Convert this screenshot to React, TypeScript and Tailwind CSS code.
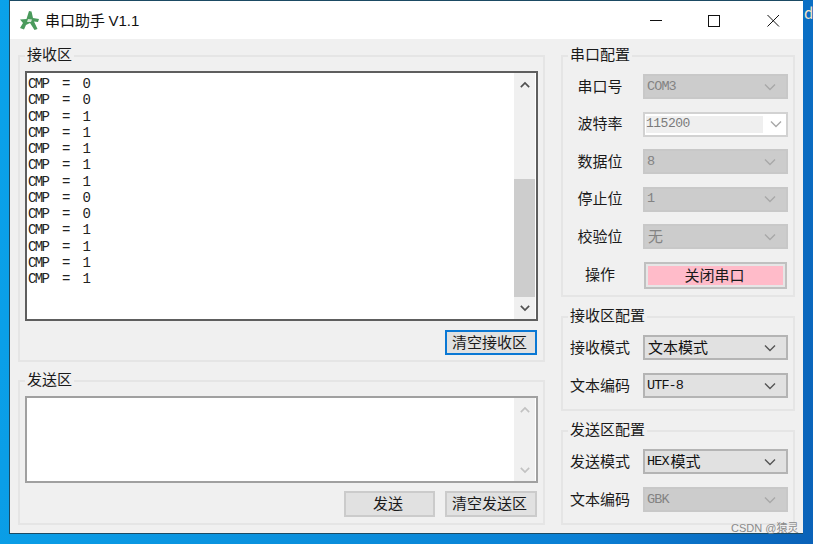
import React from "react";

const cjk = '"Noto Sans CJK SC", "Noto Sans", sans-serif';
const mono = '"Liberation Mono", monospace';

function Chevron({ color = "#444", up = false, w = 12, sw = 1.4 }: { color?: string; up?: boolean; w?: number; sw?: number }) {
  return (
    <svg width={w} height={8} viewBox="0 0 12 8" fill="none">
      <path d={up ? "M1 6.5 L6 1.5 L11 6.5" : "M1 1.5 L6 6.5 L11 1.5"} stroke={color} strokeWidth={sw} />
    </svg>
  );
}

function Group({ title, className, children }: { title: string; className: string; children: React.ReactNode }) {
  return (
    <section className={`relative border-2 border-[#e5e5e5] ${className}`}>
      <span className="absolute left-[5px] top-[-13px] bg-[#f0f0f0] px-[2px] text-[15px] leading-[20px] text-[#1a1a1a]">{title}</span>
      {children}
    </section>
  );
}

type SelectKind = "disabled" | "editable" | "enabled";

function Select({ value, suffix, zh, kind }: { value?: string; suffix?: string; zh?: string; kind: SelectKind }) {
  if (kind === "editable") {
    return (
      <div className="flex h-[25px] w-[145px] items-center border-2 border-[#d2d2d2] bg-white pl-[1px]">
        <div className="flex h-[17px] w-[117px] items-center bg-[#efefef] text-[13px] tracking-[-0.5px] text-[#7a7a7a]" style={{ fontFamily: mono }}>
          {value}
        </div>
        <div className="flex flex-1 justify-center pl-[2px]">
          <Chevron color="#a8a8a8" />
        </div>
      </div>
    );
  }
  const enabled = kind === "enabled";
  return (
    <div
      className={`flex h-[25px] w-[145px] items-center justify-between pl-[2px] pr-[10px] ${
        enabled ? "border-2 border-[#b4b4b4] bg-[#e1e1e1] text-[#111]" : "border-2 border-[#c8c8c8] bg-[#cccccc] text-[#838383]"
      }`}
    >
      <span className="flex items-center text-[15px] leading-[20px]">
        {value ? (
          <span className="text-[13.5px] tracking-[-0.9px]" style={{ fontFamily: mono }}>
            {value}
          </span>
        ) : null}
        {suffix ? <span className="ml-[2px] mt-[-2px]">{suffix}</span> : null}
        {zh ? <span className="ml-[1px] mt-[-2px]">{zh}</span> : null}
      </span>
      <Chevron color={enabled ? "#555" : "#a8a8a8"} />
    </div>
  );
}

function Row({ label, children }: { label: string; children: React.ReactNode }) {
  return (
    <div className="flex items-center">
      <span className="mt-[-2px] w-[64px] text-center text-[15px] leading-[20px] text-[#1a1a1a]">{label}</span>
      <div className="ml-[11px]">{children}</div>
    </div>
  );
}

function Btn({ children, className = "" }: { children: React.ReactNode; className?: string }) {
  return (
    <button className={`flex items-center justify-center bg-[#e1e1e1] pb-[1px] pr-[3px] text-[15px] text-[#1a1a1a] ${className}`}>{children}</button>
  );
}

function ScrollBar({ thumb, dim }: { thumb?: boolean; dim?: boolean }) {
  const c = dim ? "#c2c2c2" : "#505050";
  return (
    <div className="flex h-full w-[21px] flex-col bg-[#f0f0f0]">
      <div className="flex h-[21px] items-center justify-center pt-[3px]">
        <Chevron color={c} up w={10} sw={2} />
      </div>
      <div className="flex flex-1 flex-col justify-end">
        {thumb ? <div className="h-[118px] bg-[#cdcdcd]" /> : null}
      </div>
      <div className="flex h-[22px] items-center justify-center">
        <Chevron color={c} w={10} sw={2} />
      </div>
    </div>
  );
}

const lines = ["0", "0", "1", "1", "1", "1", "1", "0", "0", "1", "1", "1", "1"];

export default function App() {
  return (
    <div
      className="relative h-[544px] w-[813px] overflow-hidden pl-[9px]"
      style={{ fontFamily: cjk, background: "linear-gradient(100deg,#0aa2ea 0%,#0a8fdc 45%,#0a7fd4 75%,#0a62b8 100%)" }}
    >
      <span className="absolute right-0 top-[3px] w-[9px] overflow-hidden text-[15px] leading-[20px] text-[#f4e3c8]">d</span>
      <div className="flex h-[534px] w-[794px] flex-col border-b border-l border-t border-[#1b4a63] bg-[#f0f0f0]">
        <header className="flex h-[38px] shrink-0 items-center bg-white">
          <svg className="ml-[9px]" width="21" height="21" viewBox="0 0 21 21">
            <path
              d="M10 1 L12.5 1.5 L14 8 L20 9 L19 12 L15 11.5 L18.5 19 L15.5 20 L11 13 L7 15 L5 19.5 L1 18 L4 13 L1 9.5 L7.5 9 Z"
              fill="#4a9a5c"
            />
            <path d="M9 9 L13 9.5 L12 12 L8 12 Z" fill="#d5e8d8" />
          </svg>
          <h1 className="ml-[5px] text-[15px] font-normal leading-[20px] text-[#111]">
            串口助手 <span style={{ fontFamily: '"Liberation Sans", sans-serif' }}>V1.1</span>
          </h1>
          <div className="ml-auto flex items-center">
            <svg width="58" height="38" viewBox="0 0 58 38"><path d="M0 19.5 H12" stroke="#111" strokeWidth="1" /></svg>
            <svg width="59" height="38" viewBox="0 0 59 38"><rect x="0.5" y="14.5" width="11" height="11" fill="none" stroke="#111" strokeWidth="1" /></svg>
            <svg width="36" height="38" viewBox="0 0 36 38"><path d="M0.5 14 L12 25.5 M12 14 L0.5 25.5" stroke="#111" strokeWidth="1" /></svg>
          </div>
        </header>

        <main className="flex flex-1 gap-[16px] pl-[8px] pr-[8px] pt-[16px]">
          <div className="flex w-[527px] flex-col">
            <Group title="接收区" className="h-[307px] px-[5px] pt-[14px]">
              <div className="flex h-[250px] border-2 border-[#5e5e5e] bg-white">
                <div className="flex-1 whitespace-pre pl-[1px] pt-[3px] text-[14px] leading-[16.25px] tracking-[-1.6px] text-[#222]" style={{ fontFamily: mono }}>
                  {lines.map((v, i) => (
                    <div key={i}>{`CMP  =  ${v}`}</div>
                  ))}
                </div>
                <div className="h-full pr-[1px]">
                  <ScrollBar thumb />
                </div>
              </div>
              <div className="mr-[1px] mt-[9px] flex justify-end">
                <Btn className="h-[25px] w-[92px] border-2 border-[#0a78d4]">清空接收区</Btn>
              </div>
            </Group>
            <Group title="发送区" className="mt-[18px] h-[145px] px-[5px] pt-[14px]">
              <div className="flex h-[87px] border-2 border-[#a0a0a0] bg-white">
                <div className="flex-1" />
                <div className="h-full pr-[1px]">
                  <ScrollBar dim />
                </div>
              </div>
              <div className="mr-[1px] mt-[8px] flex justify-end gap-[10px]">
                <Btn className="h-[26px] w-[91px] border-2 border-[#cbcbcb]">发送</Btn>
                <Btn className="h-[26px] w-[92px] border-2 border-[#cbcbcb]">清空发送区</Btn>
              </div>
            </Group>
          </div>

          <div className="flex w-[234px] flex-col">
            <Group title="串口配置" className="h-[242px] px-[5px] pt-[17px]">
              <div className="flex flex-col gap-[12.6px]">
                <Row label="串口号"><Select value="COM3" kind="disabled" /></Row>
                <Row label="波特率"><Select value="115200" kind="editable" /></Row>
                <Row label="数据位"><Select value="8" kind="disabled" /></Row>
                <Row label="停止位"><Select value="1" kind="disabled" /></Row>
                <Row label="校验位"><Select zh="无" kind="disabled" /></Row>
                <Row label="操作">
                  <button className="ml-[1px] h-[27px] w-[143px] border-2 border-[#c0c0c0] bg-[#ffbbc9] pb-[1px] pr-[2px] text-[15px] leading-[20px] text-[#1a1a1a] outline outline-2 -outline-offset-4 outline-[#e6e6e6]">关闭串口</button>
                </Row>
              </div>
            </Group>
            <Group title="接收区配置" className="mt-[19px] h-[95px] px-[5px] pt-[17px]">
              <div className="flex flex-col gap-[13px]">
                <Row label="接收模式"><Select zh="文本模式" kind="enabled" /></Row>
                <Row label="文本编码"><Select value="UTF-8" kind="enabled" /></Row>
              </div>
            </Group>
            <Group title="发送区配置" className="mt-[19px] h-[95px] px-[5px] pt-[17px]">
              <div className="flex flex-col gap-[13px]">
                <Row label="发送模式"><Select value="HEX" suffix="模式" kind="enabled" /></Row>
                <Row label="文本编码"><Select value="GBK" kind="disabled" /></Row>
              </div>
            </Group>
          </div>
        </main>
      </div>
      <span className="absolute left-[731px] top-[521px] text-[11px] leading-[14px] text-[#8a8a8a]" style={{ fontFamily: '"Liberation Sans", "Noto Sans CJK SC", sans-serif' }}>
        CSDN @猿灵
      </span>
    </div>
  );
}
